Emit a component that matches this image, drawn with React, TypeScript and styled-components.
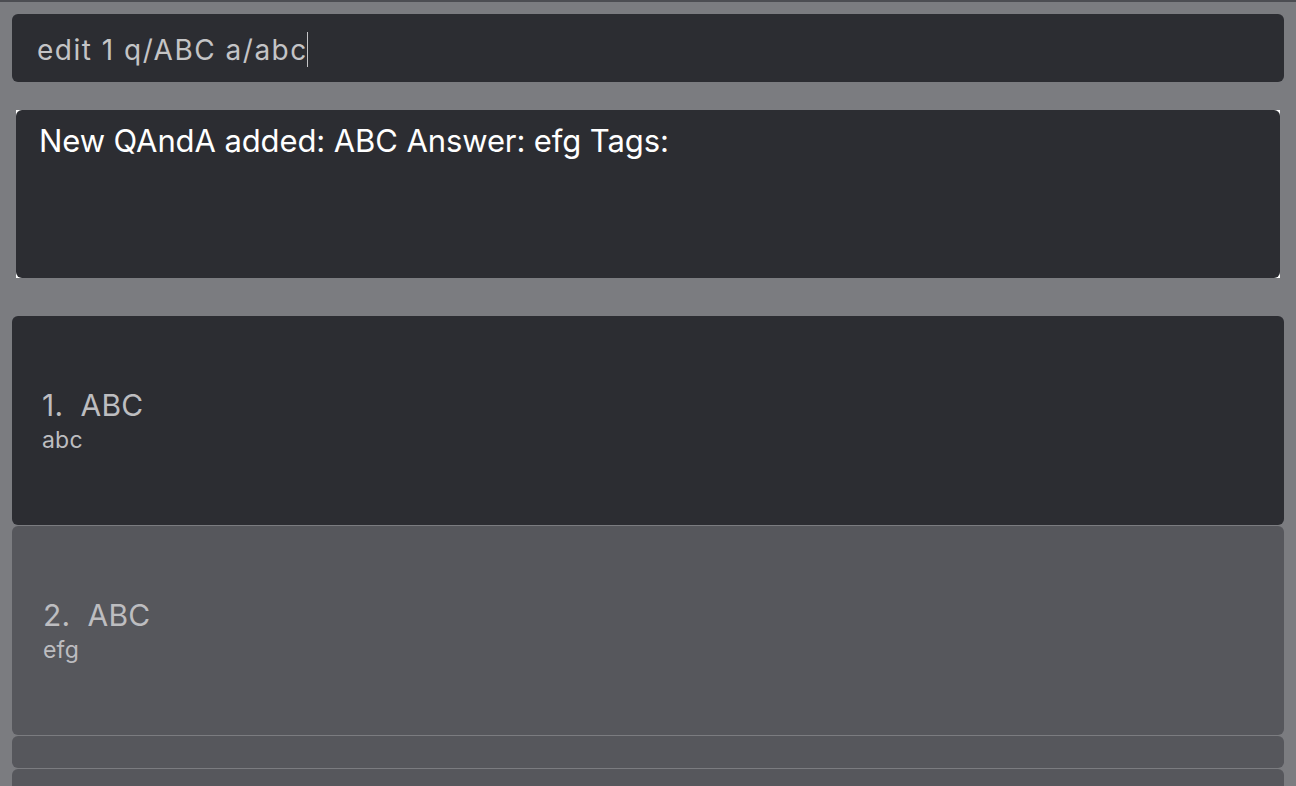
import React from "react";
import styled, { createGlobalStyle } from "styled-components";

const Global = createGlobalStyle`
  html, body { margin: 0; padding: 0; background: #7b7c80; }
  body { font-family: Inter, "Open Sans", sans-serif; overflow: hidden; }
`;

const Page = styled.div`
  width: 1296px;
  height: 786px;
  background: #7b7c80;
  border-top: 2px solid #4c4d52;
  box-sizing: border-box;
  display: flex;
  flex-direction: column;
  overflow: hidden;
`;

const CommandBox = styled.div`
  flex-shrink: 0;
  margin: 12px 12px 0 12px;
  height: 68px;
  background: #2c2d32;
  border-radius: 6px;
  display: flex;
  align-items: center;
  padding-left: 25px;
  font-size: 28px;
  line-height: 34px;
  color: #c4c4c6;
  letter-spacing: 1.5px;
`;

const CommandText = styled.span`
  margin-top: 4px;
`;

const Caret = styled.span`
  display: inline-block;
  width: 1px;
  height: 35px;
  background: #c4c4c6;
  margin-left: -1px;
  margin-top: 2px;
`;

const ResultWrap = styled.div`
  flex-shrink: 0;
  margin: 28px 16px 0 16px;
  height: 168px;
  background: #ffffff;
`;

const ResultBox = styled.div`
  height: 100%;
  background: #2c2d32;
  border-radius: 6px;
  box-sizing: border-box;
  padding: 12px 23px;
  font-size: 31px;
  line-height: 38px;
  color: #ffffff;
  letter-spacing: -0.1px;
`;

const List = styled.div`
  flex-shrink: 0;
  margin: 38px 12px 0 12px;
  display: flex;
  flex-direction: column;
  gap: 1px;
`;

const Card = styled.div<{ $selected?: boolean; $h: number }>`
  height: ${(p) => p.$h}px;
  flex-shrink: 0;
  background: ${(p) => (p.$selected ? "#2c2d32" : "#56575c")};
  border-radius: 6px;
  box-sizing: border-box;
  padding-left: ${(p) => (p.$selected ? 30 : 31)}px;
  display: flex;
  flex-direction: column;
  justify-content: center;
  color: #bdbdc0;
`;

const Title = styled.div`
  font-size: 30px;
  letter-spacing: 0.2px;
  line-height: 36px;
  white-space: pre;
`;

const Answer = styled.div`
  font-size: 23px;
  letter-spacing: 0.2px;
  line-height: 28px;
  margin-top: 3px;
`;

const cards = [
  { n: 1, q: "ABC", a: "abc", h: 209, selected: true },
  { n: 2, q: "ABC", a: "efg", h: 209, selected: false },
];

export default function App() {
  return (
    <>
      <Global />
      <Page>
        <CommandBox>
          <CommandText>edit 1 q/ABC a/abc</CommandText>
          <Caret />
        </CommandBox>
        <ResultWrap>
          <ResultBox>New QAndA added: ABC Answer: efg Tags:</ResultBox>
        </ResultWrap>
        <List>
          {cards.map((c) => (
            <Card key={c.n} $selected={c.selected} $h={c.h}>
              <Title>{`${c.n}.  ${c.q}`}</Title>
              <Answer>{c.a}</Answer>
            </Card>
          ))}
          <Card $h={32} />
          <Card $h={40} />
        </List>
      </Page>
    </>
  );
}
